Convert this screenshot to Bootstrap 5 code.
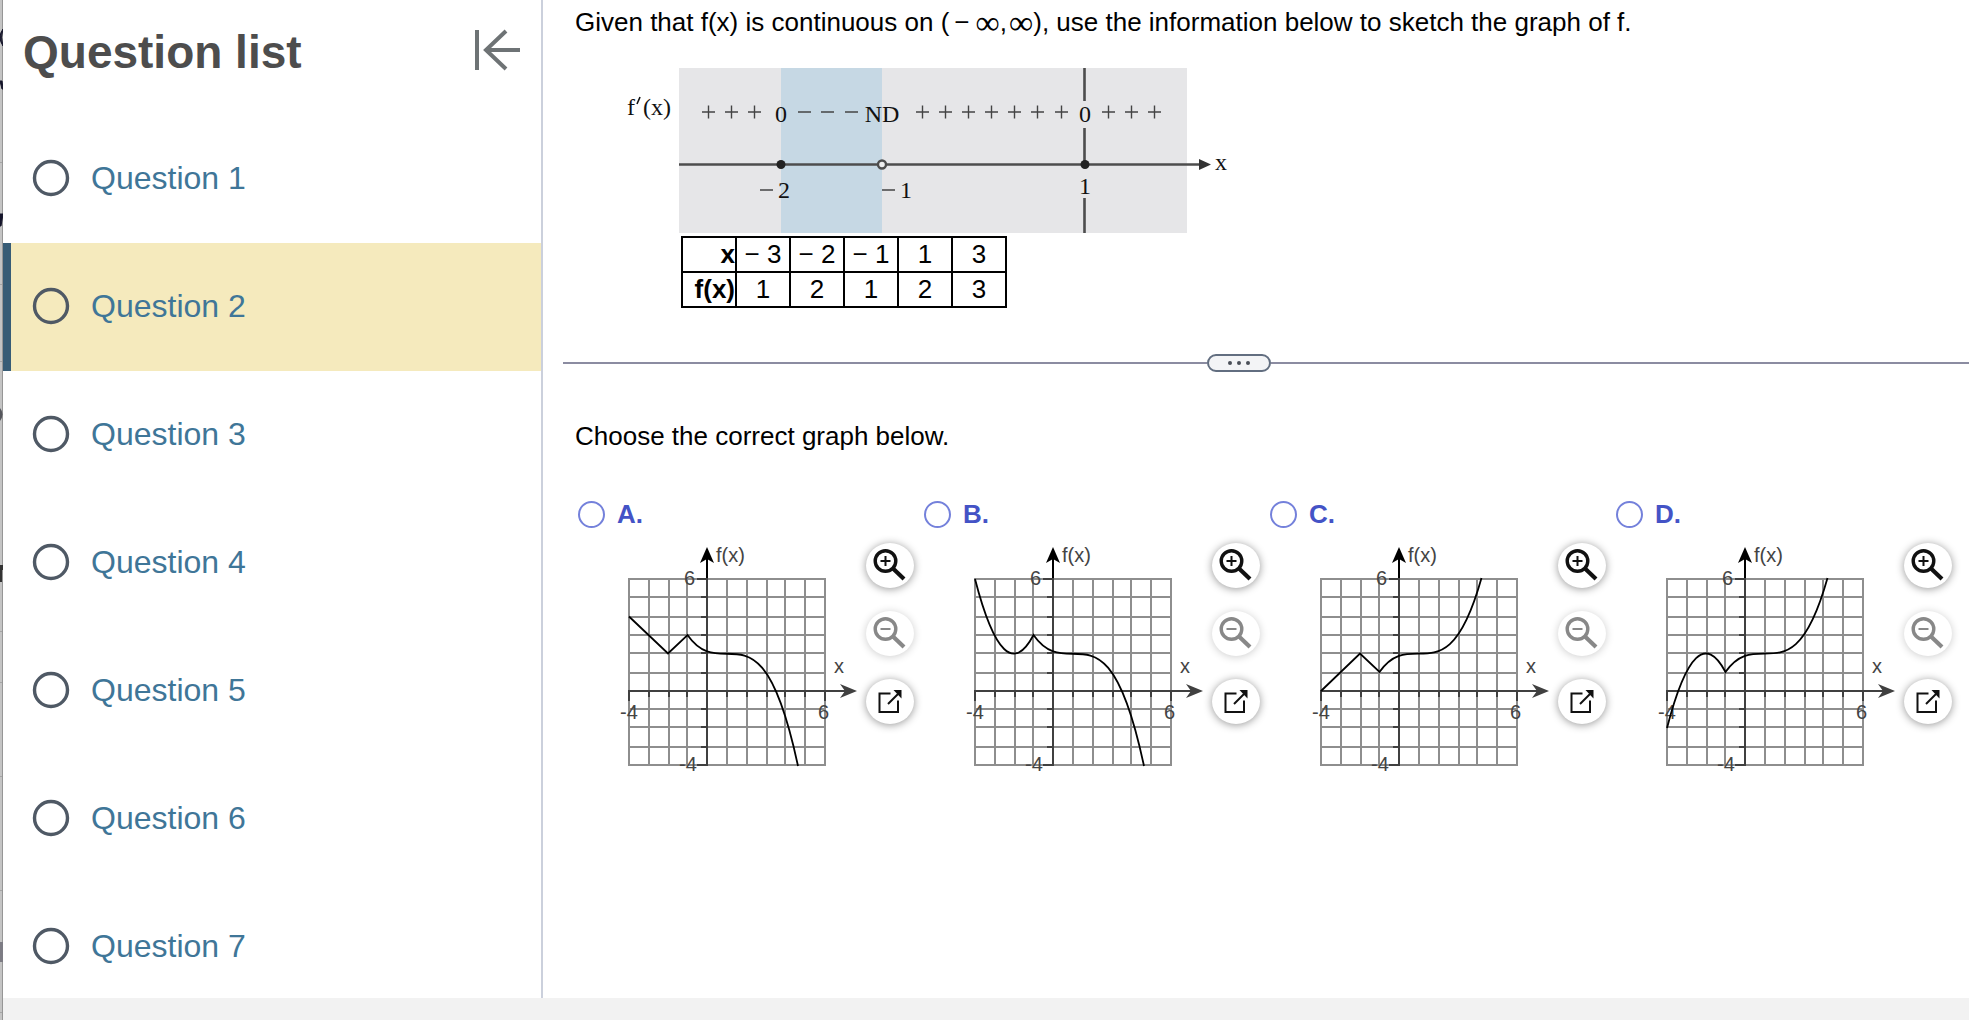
<!DOCTYPE html>
<html lang="en">
<head>
<meta charset="utf-8">
<meta name="viewport" content="width=device-width, initial-scale=1">
<title>Question list</title>
<link href="https://cdn.jsdelivr.net/npm/bootstrap@5.3.0/dist/css/bootstrap.min.css" rel="stylesheet">
<style>
  body { font-family: "Liberation Sans", Arial, sans-serif; font-size: 26px; line-height: 30px; color: #000; background: #f2f2f2; }
  .edge-strip { width: 3px; flex: none; background: #c4c4c4; }
  .quiz-shell { height: calc(100vh - 22px); background: #fff; }
  .question-nav { width: 540px; flex: none; border-right: 2px solid #cbd0dc; }
  .nav-head { height: 115px; padding: 24px 21px 0 20px; }
  .nav-head h1 { font-size: 46px; line-height: 56px; font-weight: 700; color: #4d4d4d; }
  .question-link { height: 128px; gap: 21px; padding: 0 0 2px 21px; border-left: 8px solid transparent; color: #3f7698; font-size: 32px; line-height: 40px; text-decoration: none; }
  .question-link.current { background: #f5eabd; border-left-color: #375c76; }
  .work-area { padding: 7px 0 0 20px; }
  .problem { padding-left: 12px; }
  .minus-op { margin: 0 6px 0 5px; }
  .inf { font-family: "Liberation Serif", serif; font-size: 34px; line-height: 1px; vertical-align: -3px; }
  .inf + .inf { margin-left: 2px; }
  .sign-chart { margin: 31px 0 0 62px; }
  .value-table { margin: 3px 0 0 118px; border-collapse: collapse; line-height: 28px; }
  .value-table th, .value-table td { border: 2px solid #000; width: 54px; height: 35px; padding: 0 0 2px; text-align: center; }
  .value-table th { text-align: right; }
  .splitter { margin-top: 46px; height: 18px; }
  .splitter .rule { height: 2px; background: #8b8ca1; }
  .splitter .rule-start { flex: 12 0 0; }
  .splitter .rule-end { flex: 13 0 0; }
  .splitter button { width: 64px; height: 18px; border: 2px solid #626e80; border-radius: 9px; background: #f3f4f6; }
  .lead-up { margin: 49px 0 0 12px; }
  .choices { margin-top: 48px; padding: 0 7px 0 15px; }
  .choice-label { gap: 12px; color: #4453c6; font-weight: 700; line-height: 30px; }
  .choice-label input { appearance: none; width: 27px; height: 27px; margin: 0; border: 2px solid #7481db; border-radius: 50%; background: #fff; }
  .plot-row { margin-top: 14px; padding-left: 40px; }
  .tools { gap: 23px; }
  .tools button { width: 48px; height: 45px; border: 0; border-radius: 50%; background: #fff; box-shadow: 0 1px 9px rgba(0,0,0,.42); }
  .tools button:disabled { box-shadow: 0 1px 9px rgba(0,0,0,.2); }
  #axes text { font-size: 20px; fill: #444; }
</style>
</head>
<body>
<svg class="d-none" aria-hidden="true">
  <symbol id="ring" viewBox="0 0 38 38"><circle cx="19" cy="19" r="16.5" fill="none" stroke="#4f5965" stroke-width="3.4"/></symbol>
  <symbol id="axes" viewBox="58 63 248 238">
    <path d="M69 98V286M89 98V286M109 98V286M127 98V286M167 98V286M187 98V286M207 98V286M225 98V286M245 98V286M265 98V286M68 99H266M68 117H266M68 137H266M68 155H266M68 173H266M68 193H266M68 229H266M68 247H266M68 267H266M68 285H266" stroke="#8e8e8e" stroke-width="2" fill="none"/>
    <path d="M147 80V286M68 211H285M69 211V221M89 211V217M109 211V217M127 211V217M167 211V217M187 211V217M207 211V217M225 211V217M245 211V217M265 211V221M137 99H147M141 117H147M141 137H147M141 155H147M141 173H147M141 193H147M141 229H147M141 247H147M141 267H147M137 285H147" stroke="#404040" stroke-width="2" fill="none"/>
    <path d="M147 69V98" stroke="#000" stroke-width="2"/>
    <path d="M147 67L154 83L147 79L140 83Z" fill="#000"/>
    <path d="M297 211L280 218L285 211L280 204Z" fill="#404040"/>
    <text x="156" y="82">f(x)</text><text x="124" y="105">6</text>
    <text x="60" y="239">-4</text><text x="258" y="239">6</text>
    <text x="119" y="291">-4</text><text x="274" y="193">x</text>
  </symbol>
  <symbol id="zoom-in" viewBox="0 0 48 45"><circle cx="19.5" cy="18" r="10.3" fill="none" stroke="#111" stroke-width="3.4"/><path d="M14.5 18H24.500M19.500 13V23" stroke="#111" stroke-width="2"/><path d="M27 25.500L38 36" stroke="#111" stroke-width="4.200"/></symbol>
  <symbol id="zoom-out" viewBox="0 0 48 45"><circle cx="19.5" cy="18" r="10.3" fill="none" stroke="#888" stroke-width="3.4"/><path d="M14.500 18H24.500" stroke="#888" stroke-width="2"/><path d="M27 25.500L38 36" stroke="#888" stroke-width="4.200"/></symbol>
  <symbol id="pop-out" viewBox="0 0 48 45"><path d="M24.500 14.500H13.500V33H32V21.500" fill="none" stroke="#111" stroke-width="2"/><path d="M22 25L32 15" stroke="#111" stroke-width="2"/><path d="M27.500 11H35.500V19.500Z" fill="#111"/></symbol>
</svg>

<div class="d-flex">
  <div class="edge-strip align-self-stretch">
    <svg width="3" height="1020" class="d-block" aria-hidden="true">
      <path d="M0 162.500H3M0 284.500H3M0 361.500H3M0 631.500H3M0 682.500H3M0 776.500H3M0 890.500H3M0 1012.500H3" stroke="#a5a5a5"/>
      <path d="M2.500 0V1020" stroke="#969696"/>
      <path d="M3 29Q-3 37 3 46Q0 37 3 29ZM0 81H2L3 89H2ZM0 214H3L1 226H0Z" fill="#15152a" stroke="#15152a"/>
      <path d="M0 408Q5 414 0 421Z" fill="#55565c"/><path d="M0 565H3V570H2V582H0Z" fill="#333"/><path d="M0 942H3V962H0Z" fill="#7d7c84"/>
    </svg>
  </div>
  <div class="quiz-shell d-flex flex-grow-1 overflow-hidden">
    <nav class="question-nav" aria-label="Question list">
      <div class="nav-head d-flex justify-content-between align-items-start">
        <h1 class="mb-0">Question list</h1>
        <button type="button" class="btn p-0 border-0" aria-label="Collapse question list">
          <svg width="46" height="52" viewBox="0 0 46 52" class="d-block" fill="none" stroke="#6e7375" stroke-width="4"><path d="M3 6V46"/><path d="M11 26H46M32 7L12 26L32 45"/></svg>
        </button>
      </div>
      <a href="#q1" class="question-link d-flex align-items-center"><svg width="38" height="38" aria-hidden="true"><use href="#ring"/></svg>Question 1</a>
      <a href="#q2" class="question-link current d-flex align-items-center" aria-current="true"><svg width="38" height="38" aria-hidden="true"><use href="#ring"/></svg>Question 2</a>
      <a href="#q3" class="question-link d-flex align-items-center"><svg width="38" height="38" aria-hidden="true"><use href="#ring"/></svg>Question 3</a>
      <a href="#q4" class="question-link d-flex align-items-center"><svg width="38" height="38" aria-hidden="true"><use href="#ring"/></svg>Question 4</a>
      <a href="#q5" class="question-link d-flex align-items-center"><svg width="38" height="38" aria-hidden="true"><use href="#ring"/></svg>Question 5</a>
      <a href="#q6" class="question-link d-flex align-items-center"><svg width="38" height="38" aria-hidden="true"><use href="#ring"/></svg>Question 6</a>
      <a href="#q7" class="question-link d-flex align-items-center"><svg width="38" height="38" aria-hidden="true"><use href="#ring"/></svg>Question 7</a>
    </nav>

    <main class="work-area flex-grow-1">
      <p class="problem mb-0">Given that f(x) is continuous on (<span class="minus-op">−</span><span class="inf">∞</span>,<span class="inf">∞</span>), use the information below to sketch the graph of f.</p>

      <svg class="sign-chart d-block" width="610" height="165" viewBox="625 68 610 165" font-family="Liberation Serif, serif" font-size="24" fill="#111" role="img" aria-label="Sign chart of the derivative of f">
        <rect x="679" y="68" width="508" height="165" fill="#e6e6e8"/>
        <rect x="781" y="68" width="101" height="165" fill="#c6d8e4"/>
        <path d="M1084.500 68V101M1084.500 128V164M1084.500 198V233M679 164.500H1202" stroke="#4d4d4d" stroke-width="2.600"/>
        <path d="M1211 164.500L1199 159V170Z" fill="#333"/>
        <circle cx="781" cy="164.500" r="4.500" fill="#222"/><circle cx="1085" cy="164.500" r="4.500" fill="#222"/>
        <circle cx="882" cy="164.500" r="4" fill="#eee" stroke="#4d4d4d" stroke-width="2.400"/>
        <path d="M702 112H715M708.500 105.500V118.500M725 112H738M731.500 105.500V118.500M748 112H761M754.500 105.500V118.500M916 112H929M922.500 105.500V118.500M939 112H952M945.500 105.500V118.500M962 112H975M968.500 105.500V118.500M985 112H998M991.500 105.500V118.500M1008 112H1021M1014.500 105.500V118.500M1031 112H1044M1037.500 105.500V118.500M1055 112H1068M1061.500 105.500V118.500M1102 112H1115M1108.500 105.500V118.500M1125 112H1138M1131.500 105.500V118.500M1148 112H1161M1154.500 105.500V118.500M798 112H811M821 112H834M845 112H858M760 190H773M882 190H895" stroke="#444" stroke-width="1.400"/>
        <text x="627" y="115">f</text><path d="M640 97L637 104" stroke="#111" stroke-width="1.600"/><text x="643" y="115">(x)</text>
        <g text-anchor="middle">
          <text x="781" y="122">0</text><text x="882" y="122">ND</text><text x="1085" y="122">0</text>
          <text x="784" y="198">2</text><text x="906" y="198">1</text><text x="1085" y="194">1</text><text x="1221" y="170">x</text>
        </g>
      </svg>

      <table class="value-table">
        <tr><th scope="row">x</th><td>− 3</td><td>− 2</td><td>− 1</td><td>1</td><td>3</td></tr>
        <tr><th scope="row">f(x)</th><td>1</td><td>2</td><td>1</td><td>2</td><td>3</td></tr>
      </table>

      <div class="splitter d-flex align-items-center">
        <div class="rule rule-start"></div>
        <button type="button" class="p-0 d-flex align-items-center justify-content-center" aria-label="Resize panes"><svg width="28" height="6" viewBox="0 0 28 6" fill="#4a4f58"><circle cx="5" cy="3" r="2"/><circle cx="14" cy="3" r="2"/><circle cx="23" cy="3" r="2"/></svg></button>
        <div class="rule rule-end"></div>
      </div>

      <p class="lead-up mb-0">Choose the correct graph below.</p>

      <div class="choices row g-0">
        <div class="col-3">
          <label class="choice-label d-flex align-items-center"><input type="radio" name="graph">A.</label>
          <div class="plot-row d-flex align-items-start">
            <svg width="248" height="238" viewBox="58 63 248 238" role="img" aria-label="Graph A"><use href="#axes" x="58" y="63" width="248" height="238"/><path d="M69 136.500L108 173.500L127.500 155C164.200 207.600 201 112.200 238 286" fill="none" stroke="#000" stroke-width="1.800"/></svg>
            <div class="tools d-flex flex-column">
              <button type="button" class="p-0" aria-label="Zoom in"><svg width="48" height="45" class="d-block"><use href="#zoom-in"/></svg></button>
              <button type="button" class="p-0" aria-label="Zoom out" disabled><svg width="48" height="45" class="d-block"><use href="#zoom-out"/></svg></button>
              <button type="button" class="p-0" aria-label="Open graph in a window"><svg width="48" height="45" class="d-block"><use href="#pop-out"/></svg></button>
            </div>
          </div>
        </div>
        <div class="col-3">
          <label class="choice-label d-flex align-items-center"><input type="radio" name="graph">B.</label>
          <div class="plot-row d-flex align-items-start">
            <svg width="248" height="238" viewBox="58 63 248 238" role="img" aria-label="Graph B"><use href="#axes" x="58" y="63" width="248" height="238"/><path d="M69 99Q98 211 127.500 155C164.200 207.600 201 112.200 238 286" fill="none" stroke="#000" stroke-width="1.800"/></svg>
            <div class="tools d-flex flex-column">
              <button type="button" class="p-0" aria-label="Zoom in"><svg width="48" height="45" class="d-block"><use href="#zoom-in"/></svg></button>
              <button type="button" class="p-0" aria-label="Zoom out" disabled><svg width="48" height="45" class="d-block"><use href="#zoom-out"/></svg></button>
              <button type="button" class="p-0" aria-label="Open graph in a window"><svg width="48" height="45" class="d-block"><use href="#pop-out"/></svg></button>
            </div>
          </div>
        </div>
        <div class="col-3">
          <label class="choice-label d-flex align-items-center"><input type="radio" name="graph">C.</label>
          <div class="plot-row d-flex align-items-start">
            <svg width="248" height="238" viewBox="58 63 248 238" role="img" aria-label="Graph C"><use href="#axes" x="58" y="63" width="248" height="238"/><path d="M69 211L108 173.500L127.500 192C161.200 144.100 195 220.700 229.500 98" fill="none" stroke="#000" stroke-width="1.800"/></svg>
            <div class="tools d-flex flex-column">
              <button type="button" class="p-0" aria-label="Zoom in"><svg width="48" height="45" class="d-block"><use href="#zoom-in"/></svg></button>
              <button type="button" class="p-0" aria-label="Zoom out" disabled><svg width="48" height="45" class="d-block"><use href="#zoom-out"/></svg></button>
              <button type="button" class="p-0" aria-label="Open graph in a window"><svg width="48" height="45" class="d-block"><use href="#pop-out"/></svg></button>
            </div>
          </div>
        </div>
        <div class="col-3">
          <label class="choice-label d-flex align-items-center"><input type="radio" name="graph">D.</label>
          <div class="plot-row d-flex align-items-start">
            <svg width="248" height="238" viewBox="58 63 248 238" role="img" aria-label="Graph D"><use href="#axes" x="58" y="63" width="248" height="238"/><path d="M69 248Q98 136.400 127.500 192C161.200 144.100 195 220.700 229.500 98" fill="none" stroke="#000" stroke-width="1.800"/></svg>
            <div class="tools d-flex flex-column">
              <button type="button" class="p-0" aria-label="Zoom in"><svg width="48" height="45" class="d-block"><use href="#zoom-in"/></svg></button>
              <button type="button" class="p-0" aria-label="Zoom out" disabled><svg width="48" height="45" class="d-block"><use href="#zoom-out"/></svg></button>
              <button type="button" class="p-0" aria-label="Open graph in a window"><svg width="48" height="45" class="d-block"><use href="#pop-out"/></svg></button>
            </div>
          </div>
        </div>
      </div>
    </main>
  </div>
</div>
<script src="https://cdn.jsdelivr.net/npm/bootstrap@5.3.0/dist/js/bootstrap.bundle.min.js"></script>
</body>
</html>
